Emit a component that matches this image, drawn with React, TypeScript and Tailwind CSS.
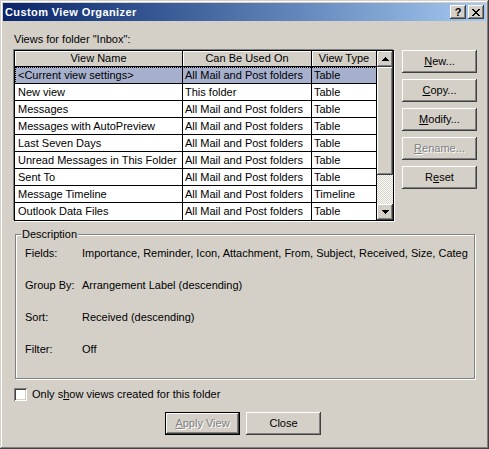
import React from "react";

const raised =
  "bg-[#d4d0c8] shadow-[inset_-1px_-1px_#404040,inset_1px_1px_#fff,inset_-2px_-2px_#808080,inset_2px_2px_#d4d0c8]";

type ViewRow = { name: string; usedOn: string; type: string };

const views: ViewRow[] = [
  { name: "<Current view settings>", usedOn: "All Mail and Post folders", type: "Table" },
  { name: "New view", usedOn: "This folder", type: "Table" },
  { name: "Messages", usedOn: "All Mail and Post folders", type: "Table" },
  { name: "Messages with AutoPreview", usedOn: "All Mail and Post folders", type: "Table" },
  { name: "Last Seven Days", usedOn: "All Mail and Post folders", type: "Table" },
  { name: "Unread Messages in This Folder", usedOn: "All Mail and Post folders", type: "Table" },
  { name: "Sent To", usedOn: "All Mail and Post folders", type: "Table" },
  { name: "Message Timeline", usedOn: "All Mail and Post folders", type: "Timeline" },
  { name: "Outlook Data Files", usedOn: "All Mail and Post folders", type: "Table" },
];

function Arrow({ down }: { down?: boolean }) {
  return (
    <svg width="7" height="4" viewBox="0 0 7 4" className={down ? "rotate-180" : ""}>
      <path d="M3 0h1v1h1v1h1v1h1v1H0V3h1V2h1V1h1z" fill="#000" />
    </svg>
  );
}

function Btn({
  children,
  disabled,
  isDefault,
}: {
  children: React.ReactNode;
  disabled?: boolean;
  isDefault?: boolean;
}) {
  const inner = (
    <div
      className={`flex h-full w-full items-center justify-center ${raised} ${
        disabled ? "text-[#808080] [text-shadow:1px_1px_0_#fff]" : "text-black"
      }`}
    >
      {children}
    </div>
  );
  if (isDefault) {
    return <div className="h-[23px] w-[75px] border border-black">{inner}</div>;
  }
  return <div className="h-[23px] w-[75px]">{inner}</div>;
}

export default function App() {
  return (
    <div className="h-[449px] w-[489px] bg-[#d4d0c8] p-[3px] font-['Liberation_Sans',Arial,sans-serif] text-[11px] leading-[13px] text-black shadow-[inset_-1px_-1px_#404040,inset_1px_1px_#d4d0c8,inset_-2px_-2px_#808080,inset_2px_2px_#fff]">
      {/* title bar */}
      <div className="flex h-[18px] items-center justify-between bg-linear-to-r from-[#0a246a] to-[#a6caf0] pl-[2px] pr-[2px]">
        <span className="font-bold tracking-[0.4px] text-white">Custom View Organizer</span>
        <div className="flex gap-[2px]">
          <div className={`flex h-[14px] w-[16px] items-center justify-center text-[11px] font-bold ${raised}`}>?</div>
          <div className={`flex h-[14px] w-[16px] items-center justify-center ${raised}`}>
            <svg width="8" height="7" viewBox="0 0 8 7">
              <path d="M0 0h2v1h1v1h2V1h1V0h2v1H7v1H6v1H5v1h1v1h1v1h1v1H6V6H5V5H3v1H2v1H0V6h1V5h1V4h1V3H2V2H1V1H0z" fill="#000" />
            </svg>
          </div>
        </div>
      </div>

      {/* body */}
      <div className="pl-[11px] pr-[9px] pt-[12px]">
        <div className="h-[13px]">Views for folder "Inbox":</div>

        <div className="mt-[4px] flex gap-[8px]">
          {/* list */}
          <div className="flex h-[171px] w-[380px] border border-black bg-white shadow-[-1px_-1px_0_#808080,1px_1px_0_#fff]">
            <div className="flex w-[362px] flex-col">
              <div className="grid h-[16px] grid-cols-[168px_129px_65px] border-b border-black">
                {["View Name", "Can Be Used On", "View Type"].map((h) => (
                  <div
                    key={h}
                    className="flex items-center justify-center border-r border-black bg-[#d4d0c8] shadow-[inset_1px_1px_#fff]"
                  >
                    {h}
                  </div>
                ))}
              </div>
              {views.map((v, i) => (
                <div
                  key={v.name}
                  className={`grid h-[17px] grid-cols-[168px_129px_65px] border-b border-black last:border-b-0 ${
                    i === 0 ? "bg-[#a6b0cd] outline-1 -outline-offset-1 outline-black outline-dotted" : ""
                  }`}
                >
                  <div className="flex items-center overflow-hidden whitespace-nowrap border-r border-black pl-[3px]">
                    {v.name}
                  </div>
                  <div className="flex items-center overflow-hidden whitespace-nowrap border-r border-black pl-[2px]">
                    {v.usedOn}
                  </div>
                  <div className="flex items-center overflow-hidden whitespace-nowrap border-r border-black pl-[2px]">
                    {v.type}
                  </div>
                </div>
              ))}
            </div>

            {/* scrollbar */}
            <div className="flex w-[16px] flex-col">
              <div className={`flex h-[16px] items-center justify-center ${raised}`}>
                <Arrow />
              </div>
              <div className={`h-[108px] ${raised}`} />
              <div className="flex-1 bg-[repeating-conic-gradient(#fff_0%_25%,#d4d0c8_0%_50%)] bg-[length:2px_2px]" />
              <div className={`flex h-[16px] items-center justify-center ${raised}`}>
                <Arrow down />
              </div>
            </div>
          </div>

          {/* side buttons */}
          <div className="flex flex-col gap-[6px]">
            <Btn>
              <span>
                <u>N</u>ew...
              </span>
            </Btn>
            <Btn>
              <span>
                <u>C</u>opy...
              </span>
            </Btn>
            <Btn>
              <span>
                <u>M</u>odify...
              </span>
            </Btn>
            <Btn disabled>
              <span>
                <u>R</u>ename...
              </span>
            </Btn>
            <Btn>
              <span>
                R<u>e</u>set
              </span>
            </Btn>
          </div>
        </div>

        {/* description group */}
        <div className="relative ml-[1px] mt-[13px] h-[145px] w-[460px] border border-[#808080] pl-[9px] pt-[12px] shadow-[inset_1px_1px_#fff,1px_1px_#fff]">
          <span className="absolute -top-[7px] left-[5px] bg-[#d4d0c8] px-[1px]">Description</span>
          <div className="flex flex-col gap-[19px]">
            {[
              ["Fields:", "Importance, Reminder, Icon, Attachment, From, Subject, Received, Size, Categ"],
              ["Group By:", "Arrangement Label (descending)"],
              ["Sort:", "Received (descending)"],
              ["Filter:", "Off"],
            ].map(([k, val]) => (
              <div key={k} className="flex h-[13px]">
                <div className="w-[57px]">{k}</div>
                <div className="whitespace-nowrap">{val}</div>
              </div>
            ))}
          </div>
        </div>

        {/* checkbox */}
        <div className="mt-[9px] flex items-center gap-[5px]">
          <div className="h-[13px] w-[13px] bg-white shadow-[inset_1px_1px_#808080,inset_-1px_-1px_#fff,inset_2px_2px_#404040,inset_-2px_-2px_#d4d0c8]" />
          <span>
            Only s<u>h</u>ow views created for this folder
          </span>
        </div>

        {/* bottom buttons */}
        <div className="mt-[11px] flex gap-[6px] pl-[151px]">
          <Btn disabled isDefault>
            <span>
              <u>A</u>pply View
            </span>
          </Btn>
          <Btn>Close</Btn>
        </div>
      </div>
    </div>
  );
}
